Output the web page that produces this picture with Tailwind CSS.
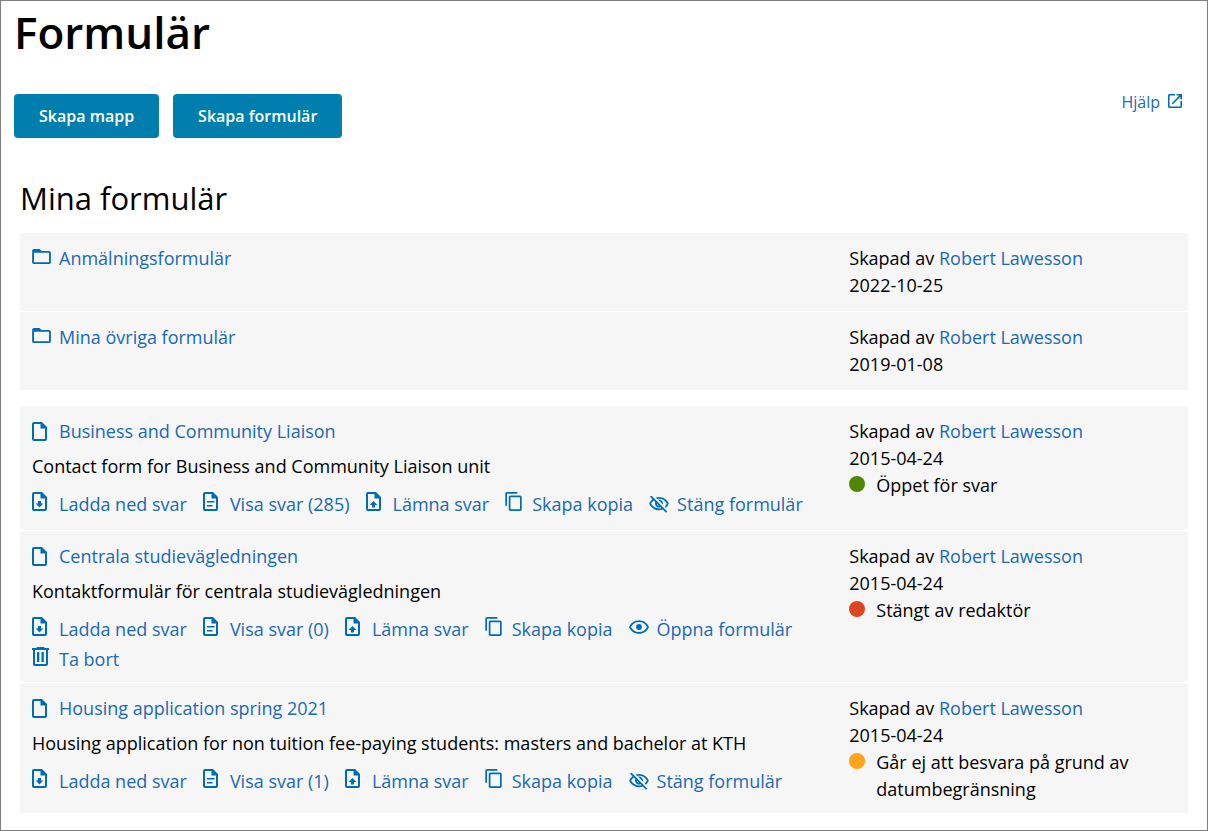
<!DOCTYPE html>
<html lang="sv">
<head>
<meta charset="utf-8">
<meta name="viewport" content="width=device-width, initial-scale=1">
<title>Formulär</title>
<script src="https://cdn.jsdelivr.net/npm/@tailwindcss/browser@4"></script>
</head>
<body class="min-h-screen border border-[#7f7f7f] bg-white font-['Open_Sans',sans-serif] text-[18px] leading-[27px] text-black">

<!-- Icon sprites -->
<svg class="hidden" aria-hidden="true">
  <symbol id="folder" viewBox="2 4 20 16"><path d="M20 6h-8l-2-2H4c-1.100 0-1.990.9-1.990 2L2 18c0 1.100.9 2 2 2h16c1.100 0 2-.9 2-2V8c0-1.100-.9-2-2-2zm0 12H4V8h16v10z"/></symbol>
  <symbol id="file" viewBox="0 0 15 19"><path fill-rule="evenodd" d="M2 0h8l5 5v12a2 2 0 0 1-2 2H2a2 2 0 0 1-2-2V2a2 2 0 0 1 2-2zM2 2v15h11V6.500H8.500V2z"/></symbol>
  <symbol id="download" viewBox="0 0 15 19"><path fill-rule="evenodd" d="M2 0h8l5 5v12a2 2 0 0 1-2 2H2a2 2 0 0 1-2-2V2a2 2 0 0 1 2-2zM2 2v15h11V6.500H8.500V2z"/><path d="M6 9h3v2.500h2.300l-3.800 4-3.800-4H6z"/></symbol>
  <symbol id="upload" viewBox="0 0 15 19"><path fill-rule="evenodd" d="M2 0h8l5 5v12a2 2 0 0 1-2 2H2a2 2 0 0 1-2-2V2a2 2 0 0 1 2-2zM2 2v15h11V6.500H8.500V2z"/><path d="M6 15.500h3V13h2.300l-3.800-4-3.800 4H6z"/></symbol>
  <symbol id="text" viewBox="0 0 15 19"><path fill-rule="evenodd" d="M2 0h8l5 5v12a2 2 0 0 1-2 2H2a2 2 0 0 1-2-2V2a2 2 0 0 1 2-2zM2 2v15h11V6.500H8.500V2z"/><path d="M4 9h7.500v1.500H4zM4 13h5.500v1.500H4z"/></symbol>
  <symbol id="copy" viewBox="2 1 19 22"><path d="M16 1H4c-1.100 0-2 .9-2 2v14h2V3h12V1zm3 4H8c-1.100 0-2 .9-2 2v14c0 1.100.9 2 2 2h11c1.100 0 2-.9 2-2V7c0-1.100-.9-2-2-2zm0 16H8V7h11v14z"/></symbol>
  <symbol id="eye" viewBox="1 4.500 22 15"><path d="M12 6.500c3.790 0 7.170 2.130 8.820 5.500-1.650 3.370-5.020 5.500-8.820 5.500S4.830 15.370 3.180 12C4.830 8.630 8.210 6.500 12 6.500m0-2C7 4.500 2.730 7.610 1 12c1.730 4.390 6 7.500 11 7.500s9.270-3.110 11-7.500c-1.730-4.390-6-7.500-11-7.500z"/><circle cx="12" cy="12" r="3.200"/></symbol>
  <symbol id="eyeoff" viewBox="1 3 22 19"><path d="M12 6c3.790 0 7.170 2.130 8.820 5.500-.59 1.220-1.420 2.270-2.410 3.120l1.410 1.410c1.390-1.230 2.490-2.770 3.180-4.530C21.270 7.110 17 4 12 4c-1.270 0-2.490.2-3.640.57l1.650 1.650C10.660 6.090 11.320 6 12 6zm-1.070 1.140L13 9.210c.57.25 1.030.71 1.280 1.280l2.070 2.070c.08-.34.14-.7.14-1.070C16.500 9.010 14.480 7 12 7c-.37 0-.72.05-1.070.14zM2.010 3.870l2.680 2.680C3.060 7.830 1.770 9.530 1 11.500 2.730 15.890 7 19 12 19c1.520 0 2.980-.29 4.320-.82l3.420 3.420 1.410-1.410L3.420 2.450 2.010 3.870zm7.500 7.500l2.610 2.610c-.04.01-.08.02-.12.02-1.380 0-2.500-1.120-2.500-2.500 0-.05.010-.08.010-.13zm-3.400-3.400l1.750 1.750c-.23.55-.36 1.150-.36 1.780 0 2.480 2.020 4.500 4.500 4.500.63 0 1.230-.13 1.770-.36l.98.98c-.88.24-1.800.38-2.750.38-3.790 0-7.170-2.130-8.820-5.500.7-1.430 1.720-2.610 2.930-3.530z"/></symbol>
  <symbol id="trash" viewBox="0 0 17 19"><path fill-rule="evenodd" d="M5 0h7l.7 1H17v2h-1v14a2 2 0 0 1-2 2H3a2 2 0 0 1-2-2V3H0V1h4.300zM3 3v14h11V3z"/><path d="M5 5h2.300v10H5zM9.500 5h2.300v10H9.500z"/></symbol>
  <symbol id="external" viewBox="3 3 18 18"><path d="M19 19H5V5h7V3H5c-1.110 0-2 .9-2 2v14c0 1.100.89 2 2 2h14c1.100 0 2-.9 2-2v-7h-2v7zM14 3v2h3.590l-9.830 9.830 1.410 1.410L19 6.410V10h2V3h-7z"/></symbol>
</svg>

<header class="px-[13px] pt-px">
  <h1 class="text-[44px] leading-[60px] font-semibold">Formulär</h1>
  <div class="mt-8 flex items-start justify-between pr-3">
    <div class="flex gap-[14px] text-[16px] leading-6 font-semibold text-white">
      <button type="button" class="h-11 rounded-[4px] bg-[#007fae] px-[25px]">Skapa mapp</button>
      <button type="button" class="h-11 rounded-[4px] bg-[#007fae] px-[25px]">Skapa formulär</button>
    </div>
    <a href="#" class="flex items-center gap-2 text-[16px] leading-4 text-[#1a69b4]">Hjälp <svg class="mb-0.5 size-[14px] fill-[#006cb7]"><use href="#external"/></svg></a>
  </div>
</header>

<main class="px-[19px] pt-10">
  <h2 class="text-[31px] leading-10 font-medium">Mina formulär</h2>

  <section class="mt-[15px] flex flex-col gap-px">
    <article class="grid grid-cols-[71fr_29fr] bg-[#f6f6f6] py-3">
      <div class="pl-3"><a href="#" class="flex w-fit items-center gap-2 text-[#1a69b4]"><svg class="mb-1 h-[15px] w-[19px] fill-[#006cb7]"><use href="#folder"/></svg>Anmälningsformulär</a></div>
      <div><p>Skapad av <a href="#" class="text-[#1a69b4]">Robert Lawesson</a></p><p>2022-10-25</p></div>
    </article>
    <article class="grid grid-cols-[71fr_29fr] bg-[#f6f6f6] py-3">
      <div class="pl-3"><a href="#" class="flex w-fit items-center gap-2 text-[#1a69b4]"><svg class="mb-1 h-[15px] w-[19px] fill-[#006cb7]"><use href="#folder"/></svg>Mina övriga formulär</a></div>
      <div><p>Skapad av <a href="#" class="text-[#1a69b4]">Robert Lawesson</a></p><p>2019-01-08</p></div>
    </article>
  </section>

  <section class="mt-4 flex flex-col gap-px">
    <article class="grid grid-cols-[71fr_29fr] bg-[#f6f6f6] pt-3 pb-[11px]">
      <div class="pl-3">
        <h3><a href="#" class="flex w-fit items-center gap-3 text-[#1a69b4]"><svg class="h-[19px] w-[15px] fill-[#006cb7]"><use href="#file"/></svg>Business and Community Liaison</a></h3>
        <p class="mt-2">Contact form for Business and Community Liaison unit</p>
        <div class="mt-[9px] flex flex-wrap gap-x-4 leading-[30px] text-[#1a69b4]">
          <a href="#" class="flex items-center gap-3"><svg class="mb-1.5 h-[19px] w-[15px] fill-[#006cb7]"><use href="#download"/></svg>Ladda ned svar</a>
          <a href="#" class="flex items-center gap-3"><svg class="mb-1.5 h-[19px] w-[15px] fill-[#006cb7]"><use href="#text"/></svg>Visa svar (285)</a>
          <a href="#" class="flex items-center gap-3"><svg class="mb-1.5 h-[19px] w-[15px] fill-[#006cb7]"><use href="#upload"/></svg>Lämna svar</a>
          <a href="#" class="flex items-center gap-[10px]"><svg class="mb-1.5 h-[19px] w-[17px] fill-[#006cb7]"><use href="#copy"/></svg>Skapa kopia</a>
          <a href="#" class="flex items-center gap-2"><svg class="h-[17px] w-[20px] fill-[#006cb7]"><use href="#eyeoff"/></svg>Stäng formulär</a>
        </div>
      </div>
      <div><p>Skapad av <a href="#" class="text-[#1a69b4]">Robert Lawesson</a></p><p>2015-04-24</p>
        <div class="flex gap-[11px]"><span class="mt-1 size-4 shrink-0 rounded-full bg-[#4f8800]"></span><p>Öppet för svar</p></div></div>
    </article>

    <article class="grid grid-cols-[71fr_29fr] bg-[#f6f6f6] pt-3 pb-2">
      <div class="pl-3">
        <h3><a href="#" class="flex w-fit items-center gap-3 text-[#1a69b4]"><svg class="h-[19px] w-[15px] fill-[#006cb7]"><use href="#file"/></svg>Centrala studievägledningen</a></h3>
        <p class="mt-2">Kontaktformulär för centrala studievägledningen</p>
        <div class="mt-[9px] flex flex-wrap gap-x-4 leading-[30px] text-[#1a69b4]">
          <a href="#" class="flex items-center gap-3"><svg class="mb-1.5 h-[19px] w-[15px] fill-[#006cb7]"><use href="#download"/></svg>Ladda ned svar</a>
          <a href="#" class="flex items-center gap-3"><svg class="mb-1.5 h-[19px] w-[15px] fill-[#006cb7]"><use href="#text"/></svg>Visa svar (0)</a>
          <a href="#" class="flex items-center gap-3"><svg class="mb-1.5 h-[19px] w-[15px] fill-[#006cb7]"><use href="#upload"/></svg>Lämna svar</a>
          <a href="#" class="flex items-center gap-[10px]"><svg class="mb-1.5 h-[19px] w-[17px] fill-[#006cb7]"><use href="#copy"/></svg>Skapa kopia</a>
          <a href="#" class="flex items-center gap-2"><svg class="mb-1 h-[14px] w-[20px] fill-[#006cb7]"><use href="#eye"/></svg>Öppna formulär</a>
          <a href="#" class="flex items-center gap-[10px]"><svg class="mb-1.5 h-[19px] w-[17px] fill-[#006cb7]"><use href="#trash"/></svg>Ta bort</a>
        </div>
      </div>
      <div><p>Skapad av <a href="#" class="text-[#1a69b4]">Robert Lawesson</a></p><p>2015-04-24</p>
        <div class="flex gap-[11px]"><span class="mt-1 size-4 shrink-0 rounded-full bg-[#df4420]"></span><p>Stängt av redaktör</p></div></div>
    </article>

    <article class="grid grid-cols-[71fr_29fr] bg-[#f6f6f6] pt-3 pb-[10px]">
      <div class="pl-3">
        <h3><a href="#" class="flex w-fit items-center gap-3 text-[#1a69b4]"><svg class="h-[19px] w-[15px] fill-[#006cb7]"><use href="#file"/></svg>Housing application spring 2021</a></h3>
        <p class="mt-2">Housing application for non tuition fee-paying students: masters and bachelor at KTH</p>
        <div class="mt-[9px] flex flex-wrap gap-x-4 leading-[30px] text-[#1a69b4]">
          <a href="#" class="flex items-center gap-3"><svg class="mb-1.5 h-[19px] w-[15px] fill-[#006cb7]"><use href="#download"/></svg>Ladda ned svar</a>
          <a href="#" class="flex items-center gap-3"><svg class="mb-1.5 h-[19px] w-[15px] fill-[#006cb7]"><use href="#text"/></svg>Visa svar (1)</a>
          <a href="#" class="flex items-center gap-3"><svg class="mb-1.5 h-[19px] w-[15px] fill-[#006cb7]"><use href="#upload"/></svg>Lämna svar</a>
          <a href="#" class="flex items-center gap-[10px]"><svg class="mb-1.5 h-[19px] w-[17px] fill-[#006cb7]"><use href="#copy"/></svg>Skapa kopia</a>
          <a href="#" class="flex items-center gap-2"><svg class="h-[17px] w-[20px] fill-[#006cb7]"><use href="#eyeoff"/></svg>Stäng formulär</a>
        </div>
      </div>
      <div><p>Skapad av <a href="#" class="text-[#1a69b4]">Robert Lawesson</a></p><p>2015-04-24</p>
        <div class="flex gap-[11px]"><span class="mt-1 size-4 shrink-0 rounded-full bg-[#fba41c]"></span><p>Går ej att besvara på grund av datumbegränsning</p></div></div>
    </article>
  </section>
</main>
</body>
</html>
